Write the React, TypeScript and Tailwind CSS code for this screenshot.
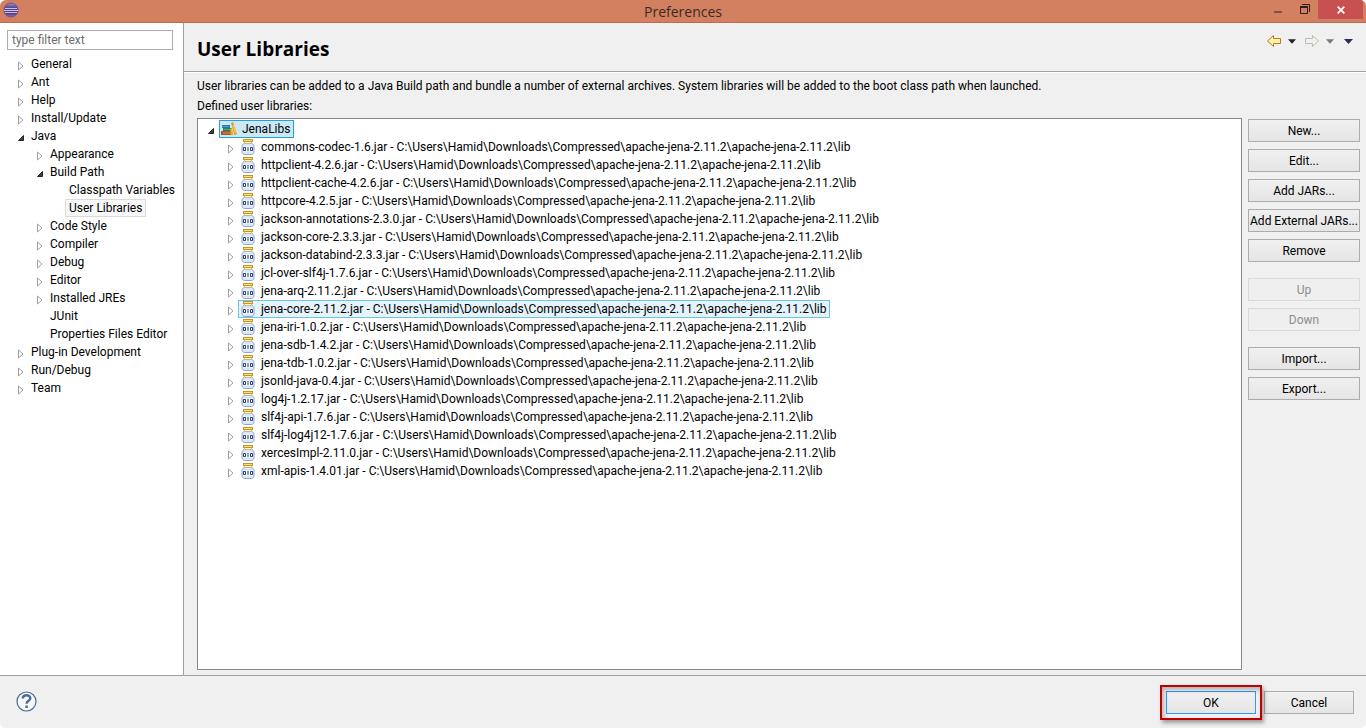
import { useState } from 'react';

type Node = { label: string; open?: boolean; children?: Node[]; expandable?: boolean };

const PAGES: Node[] = [
  { label: 'General', expandable: true },
  { label: 'Ant', expandable: true },
  { label: 'Help', expandable: true },
  { label: 'Install/Update', expandable: true },
  {
    label: 'Java',
    open: true,
    children: [
      { label: 'Appearance', expandable: true },
      { label: 'Build Path', open: true, children: [{ label: 'Classpath Variables' }, { label: 'User Libraries' }] },
      { label: 'Code Style', expandable: true },
      { label: 'Compiler', expandable: true },
      { label: 'Debug', expandable: true },
      { label: 'Editor', expandable: true },
      { label: 'Installed JREs', expandable: true },
      { label: 'JUnit' },
      { label: 'Properties Files Editor' },
    ],
  },
  { label: 'Plug-in Development', expandable: true },
  { label: 'Run/Debug', expandable: true },
  { label: 'Team', expandable: true },
];

const LIB_DIR = 'C:\\Users\\Hamid\\Downloads\\Compressed\\apache-jena-2.11.2\\apache-jena-2.11.2\\lib';

const JARS = [
  'commons-codec-1.6.jar',
  'httpclient-4.2.6.jar',
  'httpclient-cache-4.2.6.jar',
  'httpcore-4.2.5.jar',
  'jackson-annotations-2.3.0.jar',
  'jackson-core-2.3.3.jar',
  'jackson-databind-2.3.3.jar',
  'jcl-over-slf4j-1.7.6.jar',
  'jena-arq-2.11.2.jar',
  'jena-core-2.11.2.jar',
  'jena-iri-1.0.2.jar',
  'jena-sdb-1.4.2.jar',
  'jena-tdb-1.0.2.jar',
  'jsonld-java-0.4.jar',
  'log4j-1.2.17.jar',
  'slf4j-api-1.7.6.jar',
  'slf4j-log4j12-1.7.6.jar',
  'xercesImpl-2.11.0.jar',
  'xml-apis-1.4.01.jar',
];

const BUTTON_GROUPS = [
  { items: ['New...', 'Edit...', 'Add JARs...', 'Add External JARs...', 'Remove'], disabled: false },
  { items: ['Up', 'Down'], disabled: true },
  { items: ['Import...', 'Export...'], disabled: false },
];

function Arrow({ open }: { open?: boolean }) {
  return (
    <svg width="8" height="10" viewBox="0 0 8 10" className="block">
      {open ? <path d="M6.5 2.5v5h-5z" fill="#404040" stroke="#262626" /> : <path d="M1.5 1v8l4.500-4z" fill="#fff" stroke="#a0a0a0" />}
    </svg>
  );
}

function Toggle({ label, open, onClick }: { label: string; open?: boolean; onClick?: () => void }) {
  return (
    <button aria-label={`Toggle ${label}`} onClick={onClick} className="shrink-0 w-[10px] h-[18px] pt-[3px]">
      <Arrow open={open} />
    </button>
  );
}

function PageItem({ node }: { node: Node }) {
  const [open, setOpen] = useState(!!node.open);
  const selected = node.label === 'User Libraries';
  return (
    <li>
      <div className="flex h-[18px]">
        {node.children || node.expandable ? <Toggle label={node.label} open={open} onClick={() => setOpen(!open)} /> : <span className="w-[10px]" />}
        <a
          href="#"
          className={`px-[3px] leading-4 border whitespace-nowrap ${selected ? 'border-[#dadada] bg-[#f7f7f7]' : 'border-transparent'}`}
        >
          {node.label}
        </a>
      </div>
      {open && node.children && (
        <ul className="pl-[19px]">
          {node.children.map(c => <PageItem key={c.label} node={c} />)}
        </ul>
      )}
    </li>
  );
}

function EclipseIcon() {
  return (
    <svg width="16" height="16" viewBox="0 0 16 16">
      <defs>
        <linearGradient id="orb" x1="0" y1="0" x2="0" y2="1">
          <stop offset="0" stopColor="#a493bd" />
          <stop offset="0.35" stopColor="#54428a" />
          <stop offset="0.7" stopColor="#4a3680" />
          <stop offset="1" stopColor="#9079b4" />
        </linearGradient>
      </defs>
      <circle cx="8" cy="8" r="7" fill="url(#orb)" stroke="#6a5590" />
      <path d="M2 6.500h12M1 8.500h14M2 10.500h12" stroke="#d8d0e8" strokeWidth=".9" />
    </svg>
  );
}

function JarIcon() {
  return (
    <svg width="16" height="16" viewBox="0 0 16 16" className="shrink-0">
      <path d="M4.500 4.500h7c1.500.5 2.500 1.500 2.500 3v5c0 1.500-1 3-2.500 3h-7C3 15.500 2 14 2 12.500v-5c0-1.500 1-2.500 2.500-3z" fill="#dbe7f7" stroke="#8fa2c4" />
      <path d="M4.500 2.500h7v2h-7z" fill="#fffbe8" stroke="#c9b680" />
      <path d="M3 0h10v3H3z" fill="#c9971c" />
      <path d="M4 1.500h8" stroke="#f5e09a" />
      <path d="M3 7.500h10v5H3z" fill="#f7faff" />
      <path d="M3.500 8.500h2v3h-2zM8 8v4M10.500 8.500h2v3h-2z" fill="none" stroke="#263f70" />
    </svg>
  );
}

function LibraryIcon() {
  return (
    <svg width="16" height="16" viewBox="0 0 16 16" className="shrink-0">
      <path d="M1 4h8v3H1z" fill="#2878ac" />
      <path d="M1 5.5h7" stroke="#4f9cc4" />
      <path d="M2 7h9v3H2z" fill="#23845f" />
      <path d="M3 8.5h7" stroke="#4fa67c" />
      <path d="M0 10h11v4H0z" fill="#ad532c" />
      <path d="M2 12h9" stroke="#d98a55" />
      <path d="M10 2l2-1 4 12-2.500 1z" fill="#e79a18" />
      <path d="M9 8l2-1 1.500 7H10z" fill="#efae2c" />
      <path d="M12 4l2.5 8" stroke="#ffd46b" />
    </svg>
  );
}

function NavArrow({ forward }: { forward?: boolean }) {
  return (
    <svg width="16" height="14" viewBox="0 0 16 14">
      {forward ? (
        <path d="M1.500 4.500h7v-3L14.500 7l-6 5.500v-3h-7z" fill="#f2f2ec" stroke="#bdbdb5" />
      ) : (
        <path d="M14.500 4.500h-7v-3L1.500 7l6 5.500v-3h7z" fill="#fff0b0" stroke="#b57f16" />
      )}
    </svg>
  );
}

function Caret({ className }: { className: string }) {
  return (
    <svg width="9" height="5" viewBox="0 0 9 5" className={className}>
      <path d="M0 0h9L4.500 5z" fill="currentColor" />
    </svg>
  );
}

const btn = 'h-[23px] border text-center whitespace-nowrap leading-[22px]';
const btnOn = 'border-[#acacac] bg-linear-to-b from-[#f0f0f0] to-[#e5e5e5] text-black';
const btnOff = 'border-[#d9d9d9] bg-[#efefef] text-[#8d8d8d]';

export default function App() {
  const [filter, setFilter] = useState('');
  const [libOpen, setLibOpen] = useState(true);

  return (
    <div className="min-h-screen flex flex-col bg-[#f0f0f0] rounded-md overflow-hidden text-black text-[12px] font-[Roboto,'Open_Sans',sans-serif]">
      {/* Title bar */}
      <header className="h-[23px] shrink-0 flex bg-[#d28060] border-b border-[#b96d50]">
        <div className="flex-1 pl-[3px] pt-[2px]"><EclipseIcon /></div>
        <h1 className="text-[14px] leading-[23px] text-[#3b2a24] font-['Open_Sans',sans-serif]">Preferences</h1>
        <div className="flex-1 flex justify-end pr-[3px]">
          <button aria-label="Minimize" className="w-[26px] flex justify-center pt-[11px]">
            <span className="w-2 h-[2px] bg-[#805040]" />
          </button>
          <button aria-label="Restore" className="w-[27px] flex justify-center pt-1">
            <svg width="10" height="10" viewBox="0 0 10 10" fill="none" stroke="#2b211d">
              <path d="M2 .5h7.500v7.500" />
              <path d="M.5 3h7v6.500h-7z" />
              <path d="M0 3h8" strokeWidth="2" />
            </svg>
          </button>
          <button aria-label="Close" className="w-[45px] h-[19px] bg-[#c75050] flex items-center justify-center">
            <svg width="8" height="8" viewBox="0 0 8 8"><path d="M.7.7l6.600 6.600M7.300.7L.7 7.300" stroke="#fff" strokeWidth="1.800" /></svg>
          </button>
        </div>
      </header>

      <div className="flex-1 flex">
        {/* Page tree */}
        <nav className="w-[184px] shrink-0 bg-white border-r border-[#a0a0a0] pt-[7px]">
          <div className="pl-[7px] pr-[10px]">
            <input
              aria-label="Filter"
              type="text"
              placeholder="type filter text"
              value={filter}
              onChange={e => setFilter(e.target.value)}
              className="block w-full h-5 border border-[#ababab] px-1 outline-none placeholder:text-[#6d6d6d]"
            />
          </div>
          <ul className="pl-[17px] pt-[5px]">
            {PAGES.map(p => <PageItem key={p.label} node={p} />)}
          </ul>
        </nav>

        <main className="flex-1 min-w-0 flex flex-col">
          <div className="h-[49px] shrink-0 flex justify-between border-b border-[#a0a0a0] pl-[13px] pr-[13px]">
            <h2 className="text-[19px] leading-[52px] font-bold font-['Open_Sans',sans-serif]">User Libraries</h2>
            <div className="flex items-center h-9">
              <button aria-label="Back"><NavArrow /></button>
              <button aria-label="Back history" className="pl-[6px]"><Caret className="text-[#222] w-[8px]" /></button>
              <button aria-label="Forward" className="pl-2"><NavArrow forward /></button>
              <button aria-label="Forward history" className="pl-[6px]"><Caret className="text-[#777] w-[8px]" /></button>
              <button aria-label="Menu" className="pl-[10px]"><Caret className="text-[#2c2c58]" /></button>
            </div>
          </div>

          <div className="flex-1 flex flex-col border-t border-white pl-[13px] pr-[6px] pb-[5px]">
            <p className="leading-5 pt-[3px]">
              User libraries can be added to a Java Build path and bundle a number of external archives. System libraries will be added to the boot class path when launched.
            </p>
            <p className="leading-5 pb-[2px]" id="libs">Defined user libraries:</p>

            <div className="flex-1 flex gap-[6px]">
              <div aria-labelledby="libs" className="flex-1 min-w-0 bg-white border border-[#828790] pl-[9px] pt-px">
                <div className="flex gap-[2px] h-[18px]">
                  <Toggle label="JenaLibs" open={libOpen} onClick={() => setLibOpen(!libOpen)} />
                  <div className="flex items-center gap-[5px] h-[18px] border border-[#26a0da] bg-[#cbe8f6] pl-px pr-[3px]">
                    <LibraryIcon />
                    <span className="leading-4">JenaLibs</span>
                  </div>
                </div>
                {libOpen && (
                  <ul className="pl-5">
                    {JARS.map(jar => (
                      <li key={jar} className="flex gap-px h-[18px]">
                        <Toggle label={jar} />
                        <div
                          className={`flex items-center gap-[5px] border pl-px pr-[3px] whitespace-nowrap ${
                            jar.startsWith('jena-core') ? 'border-[#70c0e7] bg-[#e5f3fb]' : 'border-transparent'
                          }`}
                        >
                          <JarIcon />
                          <span className="leading-4">{jar} - {LIB_DIR}</span>
                        </div>
                      </li>
                    ))}
                  </ul>
                )}
              </div>

              <div className="w-28 shrink-0 flex flex-col gap-4 pt-px">
                {BUTTON_GROUPS.map(group => (
                  <div key={group.items[0]} className="flex flex-col gap-[7px]">
                    {group.items.map(label => (
                      <button key={label} disabled={group.disabled} className={`${btn} ${group.disabled ? btnOff : btnOn}`}>
                        {label}
                      </button>
                    ))}
                  </div>
                ))}
              </div>
            </div>
          </div>
        </main>
      </div>

      {/* Button bar */}
      <footer className="h-[53px] shrink-0 flex items-start justify-between border-t border-[#a0a0a0] pl-4 pr-3 pt-[15px]">
        <button aria-label="Help">
          <svg width="21" height="21" viewBox="0 0 21 21" fill="none" stroke="#526d95">
            <circle cx="10.500" cy="10.500" r="9.500" fill="#f6f8fb" strokeWidth="1.200" />
            <path d="M6.800 7.500c0-4.500 7.500-4.300 7.500-.3 0 2.700-3.700 2.400-3.700 5.500" strokeWidth="2.500" />
            <path d="M10.600 14.500v2.500" strokeWidth="2.500" />
          </svg>
        </button>
        <div className="flex gap-2">
          <div className="relative">
            <button className={`${btn} w-[90px] border-[#3399ff] bg-linear-to-b from-[#f0f0f0] to-[#e5e5e5]`}>OK</button>
            <div className="absolute -inset-[6px] border-2 border-[#c00000] pointer-events-none shadow-[2px_3px_4px_rgba(0,0,0,0.35),inset_2px_3px_4px_rgba(0,0,0,0.25)]" />
          </div>
          <button className={`${btn} ${btnOn} w-[90px]`}>Cancel</button>
        </div>
      </footer>
    </div>
  );
}
